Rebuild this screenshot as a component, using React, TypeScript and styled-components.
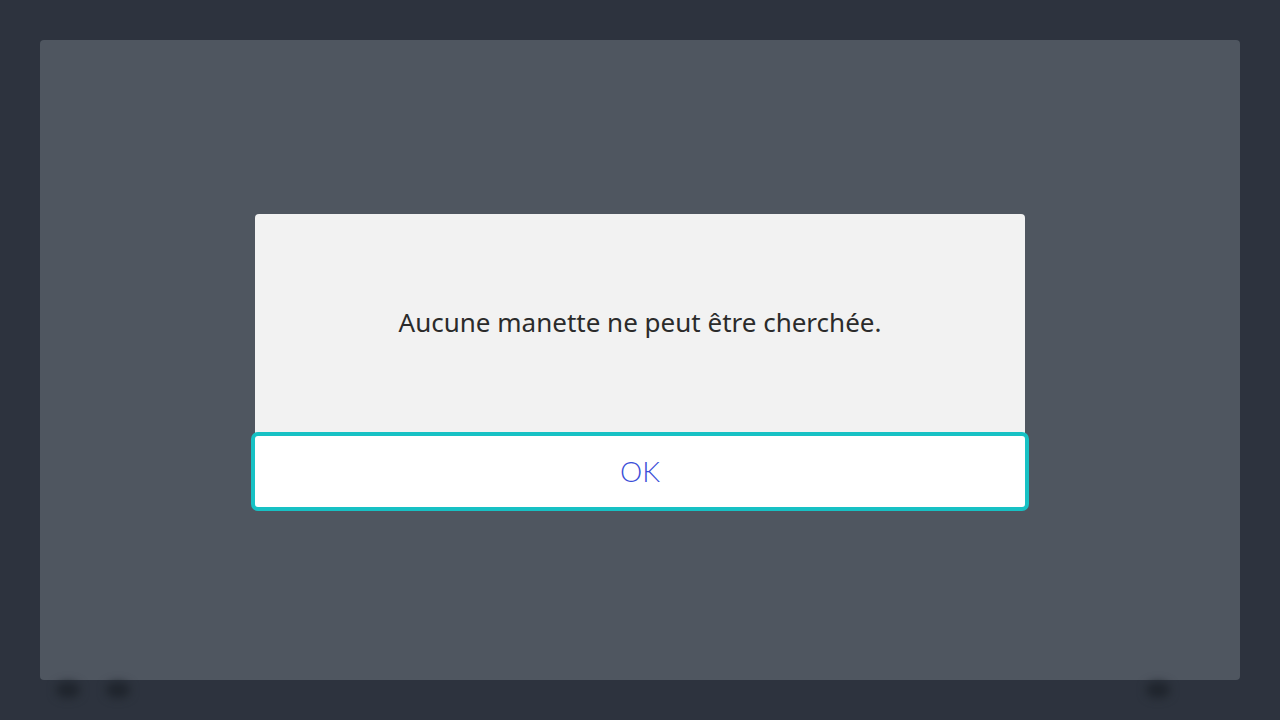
import styled, { createGlobalStyle } from 'styled-components';

const GlobalStyle = createGlobalStyle`
  html, body {
    margin: 0;
    padding: 0;
    background: #2d333e;
  }
  * {
    box-sizing: border-box;
  }
`;

export default function App() {
  return (
    <Screen>
      <GlobalStyle />
      <Panel>
        <Dialog>
          <MessageArea>
            <Message>Aucune manette ne peut être cherchée.</Message>
          </MessageArea>
          <OkButton type="button">OK</OkButton>
        </Dialog>
      </Panel>
      <Footer>
        <FooterGroup>
          <Blur />
          <Blur />
        </FooterGroup>
        <FooterGroup>
          <Blur />
        </FooterGroup>
      </Footer>
    </Screen>
  );
}

const Screen = styled.div`
  width: 1280px;
  height: 720px;
  background: #2d333e;
  padding: 40px 40px 0;
  display: flex;
  flex-direction: column;
  overflow: hidden;
`;

const Panel = styled.div`
  width: 1200px;
  height: 640px;
  background: #4f5660;
  border-radius: 4px;
  display: flex;
  align-items: center;
  justify-content: center;
`;

const Dialog = styled.div`
  width: 770px;
  display: flex;
  flex-direction: column;
  align-items: center;
  margin-top: 5px;
`;

const MessageArea = styled.div`
  width: 770px;
  height: 222px;
  background: #f2f2f2;
  border-radius: 4px 4px 0 0;
  display: flex;
  align-items: center;
  justify-content: center;
  padding-bottom: 6px;
`;

const Message = styled.p`
  margin: 0;
  font-family: 'Noto Sans', 'Open Sans', sans-serif;
  font-size: 26px;
  color: #2b2b2b;
`;

const OkButton = styled.button`
  width: 778px;
  height: 79px;
  margin-top: -4px;
  background: #ffffff;
  border: 4px solid #17c1c4;
  border-radius: 7px;
  font-family: 'Lato', 'Noto Sans', sans-serif;
  font-weight: 300;
  font-size: 28px;
  color: #3b4fd8;
  display: flex;
  align-items: center;
  justify-content: center;
  padding: 0 0 1px;
  cursor: pointer;
`;

const Footer = styled.div`
  height: 40px;
  display: flex;
  justify-content: space-between;
  padding: 0 70px 0 16px;
`;

const FooterGroup = styled.div`
  display: flex;
  gap: 26px;
`;

const Blur = styled.div`
  width: 24px;
  height: 16px;
  margin-top: 2px;
  border-radius: 50%;
  background: #1f242c;
  filter: blur(5px);
`;
